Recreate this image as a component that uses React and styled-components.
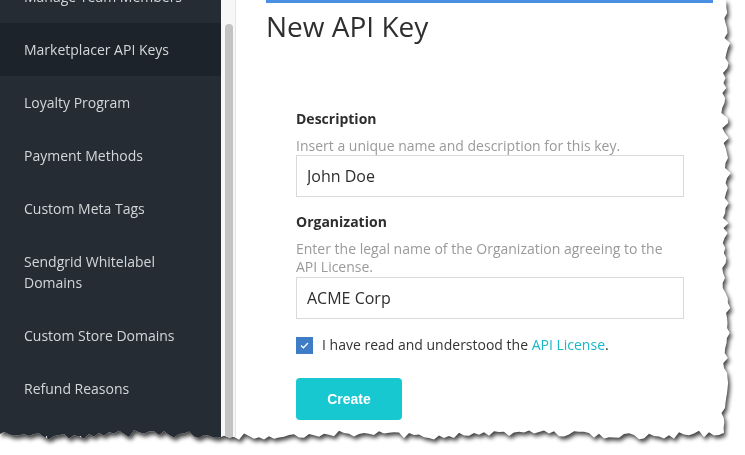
import React from "react";
import styled, { createGlobalStyle } from "styled-components";

const Global = createGlobalStyle`
  html, body { margin: 0; padding: 0; background: #ffffff; }
  body { font-family: "Open Sans", "Liberation Sans", sans-serif; overflow: hidden; }
  * { box-sizing: border-box; }
`;

function tornPolygon() {
  let s = 7;
  const rnd = () => {
    s = (s * 9301 + 49297) % 233280;
    return s / 233280;
  };
  const pts = ["0px 0px", "726px 0px"];
  for (let y = 8; y <= 432; y += 5) {
    const x = 726 + (rnd() - 0.5) * 7 + Math.sin(y / 23) * 1.5;
    pts.push(`${x.toFixed(1)}px ${y}px`);
  }
  for (let x = 724; x >= 0; x -= 5) {
    const y = 435 + (rnd() - 0.5) * 7 + Math.sin(x / 31) * 1.5;
    pts.push(`${x}px ${y.toFixed(1)}px`);
  }
  pts.push("0px 434px");
  return `polygon(${pts.join(", ")})`;
}

const Shadow = styled.div`
  width: 745px;
  height: 455px;
  filter: drop-shadow(2px 3px 2px rgba(0, 0, 0, 0.75));
`;

const Sheet = styled.div`
  width: 745px;
  height: 455px;
  background: #ffffff;
  display: flex;
  overflow: hidden;
  clip-path: ${(p) => p.$clip};
`;

const Sidebar = styled.nav`
  width: 221px;
  flex: none;
  background: #252c34;
  display: flex;
  flex-direction: column;
`;

const NavList = styled.ul`
  list-style: none;
  margin: -30px 0 0;
  padding: 0;
`;

const NavItem = styled.li`
  padding: 16px 24px;
  font-size: 14px;
  line-height: 21px;
  color: #d3d7da;
  background: ${(p) => (p.$active ? "#1d232a" : "transparent")};
`;

const ScrollTrack = styled.div`
  width: 15px;
  flex: none;
  background: #f7f7f7;
  border-right: 1px solid #e4e4e4;
  padding: 24px 2px 0 4px;
`;

const ScrollThumb = styled.div`
  width: 8px;
  height: 100%;
  background: #c3c3c3;
  border-radius: 4px 4px 0 0;
`;

const Main = styled.main`
  flex: 1;
  padding: 0 0 0 30px;
`;

const TopBar = styled.div`
  width: 447px;
  height: 3px;
  background: #4a90e2;
`;

const Title = styled.h1`
  margin: 3px 0 0;
  font-size: 28px;
  font-weight: 400;
  line-height: 40px;
  color: #2f2f2f;
`;

const Form = styled.form`
  width: 388px;
  margin: 63px 0 0 30px;
  display: flex;
  flex-direction: column;
`;

const Label = styled.label`
  font-size: 14px;
  font-weight: 700;
  color: #2e2e2e;
  line-height: 20px;
  margin-top: ${(p) => p.$top || 0}px;
`;

const Help = styled.p`
  margin: 8px 0 0;
  font-size: 14px;
  line-height: 18px;
  color: #9a9a9a;
`;

const Input = styled.input`
  margin-top: ${(p) => p.$top || 0}px;
  width: 388px;
  height: 42px;
  border: 1px solid #d9d9d9;
  border-radius: 0;
  padding: 0 10px;
  font-family: "Open Sans", "Liberation Sans", sans-serif;
  font-size: 16px;
  color: #2e2e2e;
  background: #fff;
  outline: none;
`;

const CheckRow = styled.div`
  margin-top: 16px;
  display: flex;
  align-items: center;
  gap: 9px;
  font-size: 14px;
  color: #333;
  line-height: 20px;
`;

const Box = styled.span`
  width: 17px;
  height: 17px;
  background: #3f7cc6;
  display: flex;
  align-items: center;
  justify-content: center;
  flex: none;
`;

const Link = styled.a`
  color: #18b8c6;
  text-decoration: none;
`;

const Button = styled.button`
  margin-top: 23px;
  width: 106px;
  height: 42px;
  border: none;
  border-radius: 4px;
  background: #17c8d1;
  color: #fff;
  font-family: "Liberation Sans", Arial, sans-serif;
  font-weight: 700;
  font-size: 14px;
`;

const items = [
  "Manage Team Members",
  "Marketplacer API Keys",
  "Loyalty Program",
  "Payment Methods",
  "Custom Meta Tags",
  "Sendgrid Whitelabel Domains",
  "Custom Store Domains",
  "Refund Reasons",
  "Webhooks",
];

export default function App() {
  const clip = tornPolygon();
  return (
    <>
      <Global />
      <Shadow>
        <Sheet $clip={clip}>
          <Sidebar>
            <NavList>
              {items.map((t) => (
                <NavItem key={t} $active={t === "Marketplacer API Keys"}>
                  {t}
                </NavItem>
              ))}
            </NavList>
          </Sidebar>
          <ScrollTrack>
            <ScrollThumb />
          </ScrollTrack>
          <Main>
            <TopBar />
            <Title>New API Key</Title>
            <Form onSubmit={(e) => e.preventDefault()}>
              <Label>Description</Label>
              <Help>Insert a unique name and description for this key.</Help>
              <Input defaultValue="John Doe" />
              <Label $top={15}>Organization</Label>
              <Help>Enter the legal name of the Organization agreeing to the API License.</Help>
              <Input $top={1} defaultValue="ACME Corp" />
              <CheckRow>
                <Box>
                  <svg width="9" height="7" viewBox="0 0 9 7">
                    <path d="M1 3.6 L3.4 5.8 L8 1" fill="none" stroke="#fff" strokeWidth="1.3" />
                  </svg>
                </Box>
                <span>
                  I have read and understood the <Link href="#">API License</Link>.
                </span>
              </CheckRow>
              <Button type="button">Create</Button>
            </Form>
          </Main>
        </Sheet>
      </Shadow>
    </>
  );
}
